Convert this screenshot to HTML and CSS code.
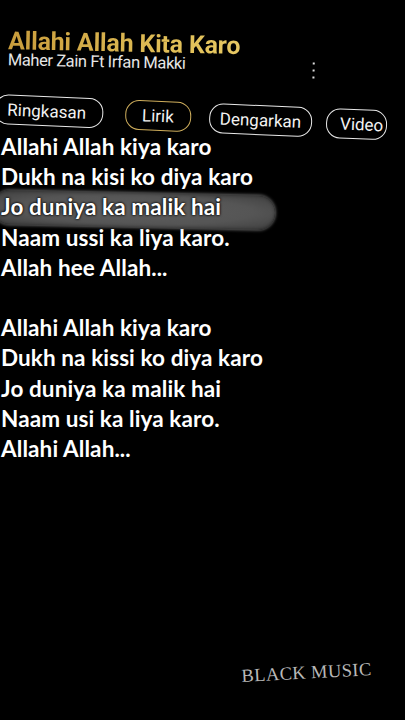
FILE: index.html
```html
<!DOCTYPE html>
<html>
<head>
<meta charset="utf-8">
<link rel="stylesheet" href="styles.css">
</head>
<body>
<div class="screen">
  <header class="head">
    <div class="titles">
      <h1 class="title">Allahi Allah Kita Karo</h1>
      <div class="artist">Maher Zain Ft Irfan Makki</div>
    </div>
    <div class="more"><span></span><span></span><span></span></div>
  </header>
  <nav class="tabs">
    <span class="tab t1">Ringkasan</span>
    <span class="tab t2 active">Lirik</span>
    <span class="tab t3">Dengarkan</span>
    <span class="tab t4">Video</span>
  </nav>
  <section class="lyrics">
    <p class="line">Allahi Allah kiya karo</p>
    <p class="line">Dukh na kisi ko diya karo</p>
    <p class="line current"><span class="glow"></span><span class="txt">Jo duniya ka malik hai</span></p>
    <p class="line">Naam ussi ka liya karo.</p>
    <p class="line">Allah hee Allah...</p>
    <p class="line blank">&nbsp;</p>
    <p class="line">Allahi Allah kiya karo</p>
    <p class="line">Dukh na kissi ko diya karo</p>
    <p class="line">Jo duniya ka malik hai</p>
    <p class="line">Naam usi ka liya karo.</p>
    <p class="line">Allahi Allah...</p>
  </section>
  <div class="mark">BLACK MUSIC</div>
</div>
</body>
</html>
```
FILE: styles.css
```css
html, body {
  margin: 0;
  padding: 0;
  background: #000;
}
.screen {
  position: relative;
  width: 405px;
  height: 720px;
  overflow: hidden;
  background: #000;
  color: #fff;
}
.head {
  display: flex;
  align-items: flex-start;
  padding: 26px 0 0 9px;
  transform: rotate(1.2deg);
  transform-origin: left top;
}
.titles {
  width: 302px;
}
.title {
  margin: 0;
  font-family: Roboto, "Liberation Sans", sans-serif;
  font-weight: 700;
  font-size: 25px;
  line-height: 29px;
  letter-spacing: -0.2px;
  background: linear-gradient(90deg, #c89c3c, #e3c25a 60%, #ebd070);
  -webkit-background-clip: text;
  background-clip: text;
  color: transparent;
}
.artist {
  font-family: Roboto, "Liberation Sans", sans-serif;
  font-size: 16.5px;
  line-height: 18px;
  letter-spacing: -0.4px;
  color: #e6e6e6;
  margin-top: -4px;
}
.more {
  display: flex;
  flex-direction: column;
  gap: 5px;
  padding-top: 30px;
  margin-left: 3px;
}
.more span {
  width: 2px;
  height: 2px;
  background: #ddd;
}
.tabs {
  display: flex;
  align-items: center;
  margin-top: 22px;
  transform: rotate(2.4deg);
  transform-origin: left top;
  margin-left: -5px;
}
.tab {
  font-family: Roboto, "Liberation Sans", sans-serif;
  font-size: 17px;
  line-height: 20px;
  color: #f2f2f2;
  border: 1.5px solid #e8e8e8;
  border-radius: 14px;
  padding: 4px 10px;
}
.tab.t1 { padding-left: 12px; padding-right: 16px; }
.tab.t2 {
  border-color: #cfae5c;
  padding: 4px 16px;
  margin-left: 22px;
}
.tab.t3 { padding: 4px 10px; margin-left: 18px; }
.tab.t4 { padding: 4px 3px 4px 13px; margin-left: 14px; }
.lyrics {
  margin-top: 8px;
  padding-left: 1px;
}
.line {
  margin: 0;
  font-family: Lato, "Open Sans", sans-serif;
  font-weight: 700;
  font-size: 22.5px;
  line-height: 30.2px;
  letter-spacing: 0.1px;
  color: #fff;
  white-space: nowrap;
}
.line.current {
  position: relative;
}
.line.current .txt {
  position: relative;
  text-shadow: 0 0 2px #000, 0 0 3px #000;
}
.glow {
  position: absolute;
  left: -8px;
  top: 1px;
  width: 282px;
  height: 34px;
  border-radius: 17px;
  background: radial-gradient(ellipse at 50% 50%, #5e5e5e 0%, #555 60%, #444 90%, #3a3a3a 100%);
  box-shadow: 0 0 3px 1px rgba(170,170,170,0.55), inset 0 0 4px rgba(0,0,0,0.4);
  transform: rotate(1.2deg);
  filter: blur(0.5px);
}
.mark {
  position: absolute;
  left: 242px;
  top: 666px;
  font-family: "Liberation Serif", "DejaVu Serif", serif;
  font-size: 18.5px;
  letter-spacing: 0.4px;
  color: #b8b8b8;
  transform: rotate(-3deg);
  transform-origin: left bottom;
}
```
